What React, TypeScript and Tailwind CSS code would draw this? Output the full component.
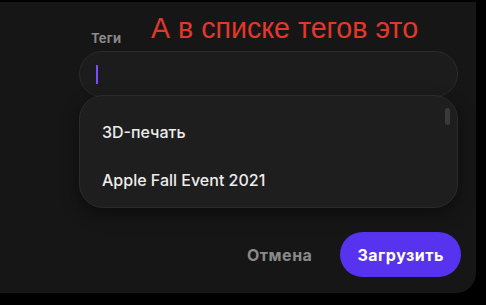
import React from 'react';

const tags = ['3D-печать', 'Apple Fall Event 2021'];

const App: React.FC = () => {
  return (
    <div className="w-[486px] h-[305px] bg-black overflow-hidden pt-[2px]" style={{ fontFamily: 'Inter, "Noto Sans", sans-serif' }}>
      <div className="relative w-[476px] h-[291px] bg-[#161616] rounded-br-[20px] flex flex-col pl-[79px] pr-[18px] pt-[28px]">
        <span
          className="absolute left-[151px] top-[10px] text-[28.6px] leading-[32px] text-[#e2382c]"
          style={{ fontFamily: '"Liberation Sans", Arial, sans-serif' }}
        >
          А в списке тегов это
        </span>

        <label className="ml-[12px] text-[13px] leading-[16px] font-bold text-[#8a8a8a] tracking-[0.2px]">Теги</label>

        <div className="mt-[5px] h-[46px] rounded-full border border-[#2b2b2b] bg-[#1c1c1c] flex items-center">
          <span className="ml-[16px] w-[2px] h-[19px] bg-[#7a4dff]" />
        </div>

        <div className="relative -mt-[2px] h-[113px] rounded-[24px] border border-[#2b2b2b] bg-[#1e1e1e] shadow-[0_6px_18px_rgba(0,0,0,0.45)] flex flex-col gap-[27px] pl-[22px] pt-[26px]">
          {tags.map((tag) => (
            <div key={tag} className="text-[16px] leading-[21px] font-medium text-[#ededed]">
              {tag}
            </div>
          ))}
          <span className="absolute right-[7px] top-[12px] w-[5px] h-[17px] rounded-full bg-[#3a3a3a]" />
        </div>

        <div className="mt-[24px] -mr-[3px] flex items-center justify-end gap-[28px]">
          <button className="text-[16px] leading-[20px] font-bold tracking-[0.5px] text-[#8a8a8a]">Отмена</button>
          <button className="h-[45px] px-[17px] rounded-full bg-[#5833ef] text-[16px] leading-[20px] font-bold tracking-[0.5px] text-white">
            Загрузить
          </button>
        </div>
      </div>
    </div>
  );
};

export default App;
